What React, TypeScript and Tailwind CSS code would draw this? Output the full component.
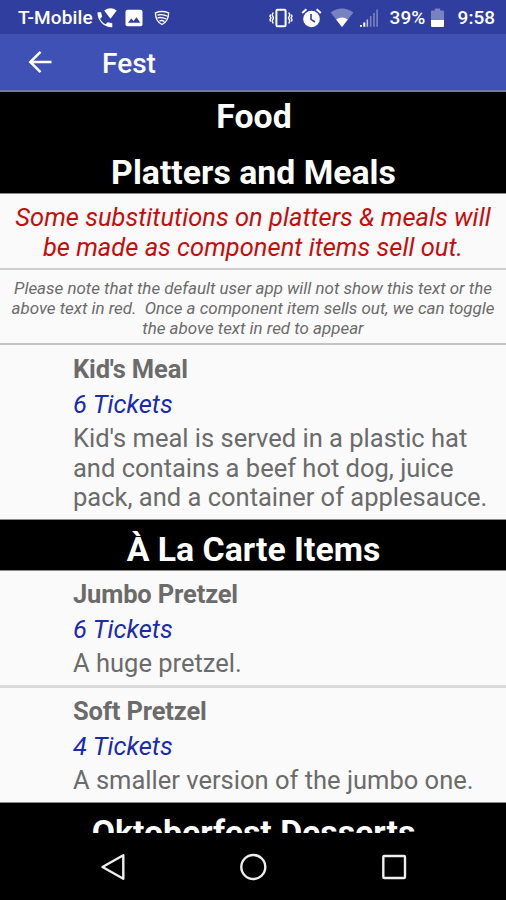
import { ReactNode } from "react";

interface ItemProps {
  name: string;
  tickets: number;
  description: string;
}

const StatusBar = () => {
  return (
    <div className="flex h-[34px] shrink-0 items-center bg-[#303f9f] pt-[1px] pr-[11px] pl-[18px] text-[19px] leading-[33px] font-medium">
      <span className="w-[78px] whitespace-nowrap tracking-[0.15px]">T-Mobile</span>
      <svg className="h-[22px] w-[22px]" viewBox="0 0 22 22" fill="currentColor">
        <path d="M1.500 5.200h3.700l.9 4.600-2 2c1.300 2.400 3 4.200 5.500 5.500l2-2 4.700.9V20.200C8 20.600 1.200 13.500 1.500 5.200z" />
        <path d="M8.200 3.400Q14.500-.9 20.700 3.400L14.500 11.800z" />
      </svg>
      <svg className="ml-[7px] h-[18px] w-[18px]" viewBox="0 0 18 18">
        <rect x="0.500" y="0.700" width="17" height="16.500" rx="2" fill="#fff" />
        <path d="M3 13.800l3.200-4.300 2.300 2.600 3-3.800 3.800 5.500z" fill="#303f9f" />
      </svg>
      <svg
        className="ml-[11px] h-[16px] w-[16px]"
        viewBox="0 0 16 16"
        fill="none"
        stroke="currentColor"
        strokeWidth="1.300"
      >
        <path d="M1.400 2.800Q8 .2 14.600 2.800C14.600 8 12 12.500 8 14.500C4 12.500 1.400 8 1.400 2.800z" />
        <path d="M3.500 5Q9 3.800 13.500 6.200M3.500 7.800Q8 6.800 12.200 9M5.500 10.800Q8 10 10.500 11.500" />
      </svg>

      <svg className="ml-auto h-[22px] w-[24px]" viewBox="0 0 24 22" fill="none" stroke="currentColor">
        <rect x="7.400" y="2.800" width="9.200" height="16.400" rx="1.200" strokeWidth="2" />
        <path
          d="M4.200 5.500l-1 2.500 1.300 3-1.300 3 1 2.500M1.600 7.500l-.6 1.800 1 1.700-1 1.700.6 1.800M19.800 5.500l1 2.500-1.300 3 1.300 3-1 2.500M22.400 7.500l.6 1.800-1 1.700 1 1.700-.6 1.800"
          strokeWidth="1.400"
        />
      </svg>
      <svg className="ml-[8px] h-[22px] w-[21px]" viewBox="0 0 21 22">
        <circle cx="10.500" cy="12" r="8.300" fill="#fff" />
        <path d="M1.200 6l4.200-3.700M19.800 6l-4.200-3.700" stroke="#fff" strokeWidth="2" />
        <path d="M10 7v5.300l4 2.700" fill="none" stroke="#303f9f" strokeWidth="1.600" />
      </svg>
      <svg className="ml-[8px] h-[20px] w-[24px]" viewBox="0 0 24 20">
        <path d="M.6 4.500Q12-3.500 23.400 4.500L12 19z" fill="#fff" opacity="0.350" />
        <path d="M6.200 11.600Q12 7.600 17.800 11.600L12 19z" fill="#fff" />
      </svg>
      <svg className="ml-[5px] h-[20px] w-[20px]" viewBox="0 0 20 20" fill="#fff">
        <path d="M1 17h2v1.800H1zM4.300 14.500h2v4.300h-2z" />
        <path d="M7.600 11.500h1.500v7.300H7.600z" opacity="0.700" />
        <path d="M10.900 8h1.600v10.800h-1.600zM14.200 5h1.600v13.800h-1.600zM17.300 1.500h1.600v17.300h-1.600z" opacity="0.350" />
      </svg>
      <span className="ml-[11px] w-[38px] whitespace-nowrap">39%</span>
      <svg className="ml-[3px] h-[20px] w-[13px]" viewBox="0 0 13 20" fill="#fff">
        <path d="M0 3.500q0-1 1-1h2.800V.5h5.400v2H12q1 0 1 1V12H0z" opacity="0.350" />
        <path d="M0 12h13v6q0 1-1 1H1q-1 0-1-1z" />
      </svg>
      <span className="ml-[14px] whitespace-nowrap">9:58</span>
    </div>
  );
};

const Toolbar = () => {
  return (
    <div className="flex h-[58px] shrink-0 items-center border-b-2 border-[#6f79b0] bg-[#3f51b5] pl-[28px]">
      <svg
        className="h-[24px] w-[24px]"
        viewBox="0 0 24 24"
        fill="none"
        stroke="currentColor"
        strokeWidth="2.500"
      >
        <path d="M23.500 12H2.500M12.500 1.800L2.300 12l10.200 10.200" />
      </svg>
      <h1 className="ml-[50px] pt-[4px] text-[28px] leading-[34px] font-medium">Fest</h1>
    </div>
  );
};

const SectionHeader = ({ children }: { children: ReactNode }) => {
  return (
    <h2 className="h-[51px] shrink-0 border-b border-[#8a8a8a] bg-black pt-[9.5px] pl-[1px] text-center text-[33.8px] leading-[40px] font-bold whitespace-nowrap">
      {children}
    </h2>
  );
};

const Item = ({ name, tickets, description }: ItemProps) => {
  return (
    <div className="pt-[9px] pb-[6.5px] pl-[73px] text-[25.5px] leading-[29.5px] text-[#6b6b6b]">
      <h3 className="font-bold tracking-[-0.15px]">{name}</h3>
      <p className="mt-[5px] text-[#1a2bab] italic">{tickets} Tickets</p>
      <p className="mt-[5px]">{description}</p>
    </div>
  );
};

const NavBar = () => {
  return (
    <div className="flex h-[67px] shrink-0 items-center justify-between bg-black pr-[98px] pl-[99px]">
      <svg className="h-[30px] w-[27px]" viewBox="0 0 27 30" fill="none" stroke="#eee" strokeWidth="2.400">
        <path d="M24.300 3.200v23.600L3.500 15z" strokeLinejoin="round" />
      </svg>
      <svg className="h-[30px] w-[30px]" viewBox="0 0 30 30" fill="none" stroke="#eee" strokeWidth="2.400">
        <circle cx="15.300" cy="15" r="12" />
      </svg>
      <svg className="h-[30px] w-[28px]" viewBox="0 0 28 30" fill="none" stroke="#eee" strokeWidth="2.400">
        <rect x="3.300" y="4" width="21.700" height="22" rx="1" />
      </svg>
    </div>
  );
};

const App = () => {
  return (
    <div className="flex h-[900px] w-[506px] flex-col overflow-hidden bg-[#fafafa] font-[Roboto,sans-serif] text-white">
      <StatusBar />
      <Toolbar />
      <main className="min-h-0 flex-1 overflow-hidden">
        <h2 className="h-[51px] bg-black pt-[5px] pl-[2px] text-center text-[33.8px] leading-[40px] font-bold">
          Food
        </h2>
        <SectionHeader>Platters and Meals</SectionHeader>
        <p className="h-[76px] border-b-2 border-[#cfcfcf] pt-[9px] text-center text-[25.5px] leading-[29.5px] text-[#c40d0d] italic">
          Some substitutions on platters &amp; meals will
          <br />
          be made as component items sell out.
        </p>
        <p className="h-[75px] border-b-2 border-[#c4c4c4] pt-[9px] text-center text-[16.95px] leading-[19.8px] text-[#6b6b6b] italic">
          Please note that the default user app will not show this text or the
          <br />
          above text in red.&nbsp; Once a component item sells out, we can toggle
          <br />
          the above text in red to appear
        </p>
        <div className="pt-[1px]">
          <Item
            name="Kid's Meal"
            tickets={6}
            description="Kid's meal is served in a plastic hat and contains a beef hot dog, juice pack, and a container of applesauce."
          />
        </div>
        <div className="border-t border-[#8a8a8a]">
          <SectionHeader>À La Carte Items</SectionHeader>
        </div>
        <Item name="Jumbo Pretzel" tickets={6} description="A huge pretzel." />
        <div className="h-[3px] bg-[#dadada]" />
        <Item name="Soft Pretzel" tickets={4} description="A smaller version of the jumbo one." />
        <div className="border-t border-[#8a8a8a]">
          <SectionHeader>Oktoberfest Desserts</SectionHeader>
        </div>
      </main>
      <NavBar />
    </div>
  );
};

export default App;
